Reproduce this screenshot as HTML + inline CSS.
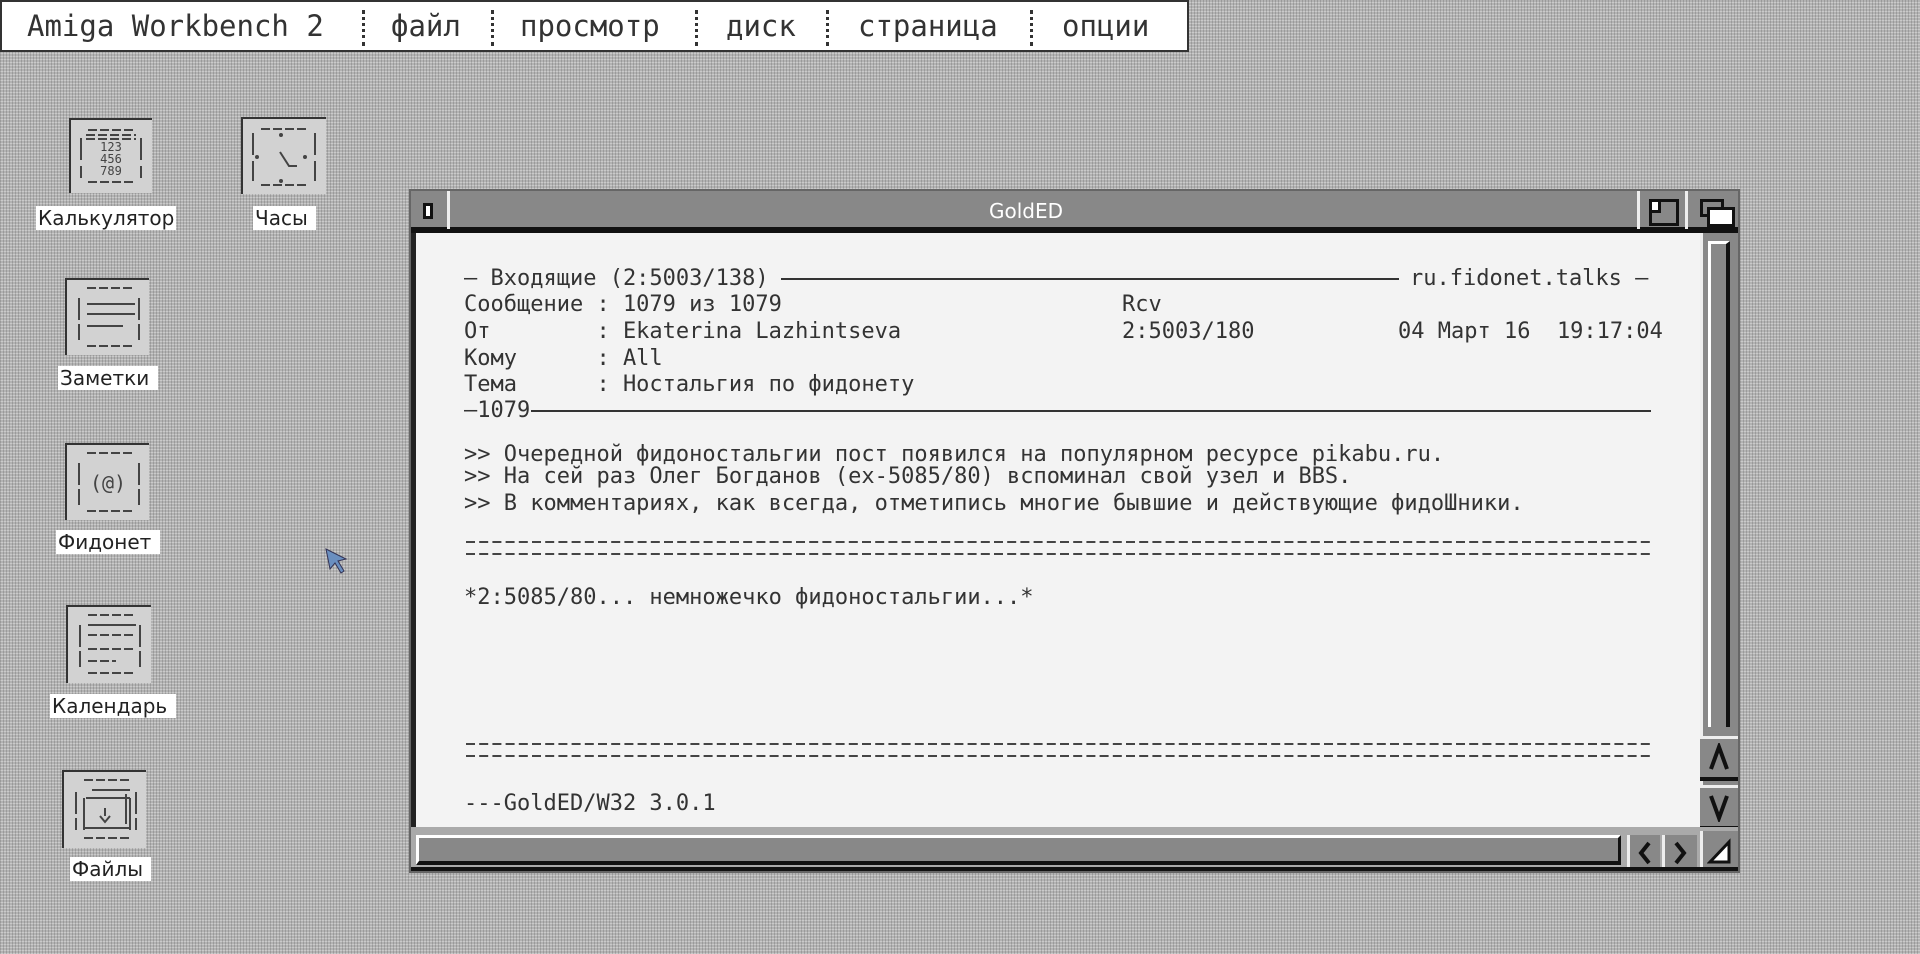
<!DOCTYPE html>
<html><head><meta charset="utf-8"><style>
*{margin:0;padding:0;box-sizing:border-box}
body{width:1920px;height:954px;overflow:hidden;position:relative;
background:repeating-linear-gradient(90deg,rgba(0,0,0,.14) 0 1px,transparent 1px 3px),repeating-linear-gradient(0deg,rgba(255,255,255,.3) 0 1px,transparent 1px 3px),#b3b3b3;
font-family:"DejaVu Sans Mono","Liberation Mono",monospace;color:#2a2a2a}
.abs{position:absolute}
#menu{left:0;top:0;width:1189px;height:52px;background:#fff;border:2px solid #333;}
#menu span{position:absolute;top:6px;font-size:29px;line-height:36px;color:#333;white-space:pre}
#menu i{position:absolute;top:8px;height:36px;border-left:3px dotted #333}
.icon{position:absolute;background:#d2d2d2;border-top:2px solid #333;border-left:2px solid #333}
.lbl{position:absolute;background:#fff;font-family:"DejaVu Sans","Liberation Sans",sans-serif;font-size:20px;line-height:24px;color:#222;padding:0 2px;white-space:pre}
#win{left:409px;top:189px;width:1331px;height:684px;background:#fff;border:2px solid #666}
.t{position:absolute;font-size:22px;line-height:27px;white-space:pre;color:#333}
.gb{position:absolute;background:#888}
</style></head><body>
<div id="menu" class="abs">
<span style="left:25px">Amiga Workbench 2</span><i style="left:360px"></i>
<span style="left:389px">файл</span><i style="left:489px"></i>
<span style="left:518px">просмотр</span><i style="left:693px"></i>
<span style="left:724px">диск</span><i style="left:824px"></i>
<span style="left:856px">страница</span><i style="left:1028px"></i>
<span style="left:1060px">опции</span>
</div>

<!-- icons -->
<div class="icon" style="left:69px;top:118px;width:83px;height:75px">
<svg width="80" height="72" stroke="#444" stroke-width="2" fill="none"><path d="M17 10h46M15 15h50M15 19h50" stroke-dasharray="9 3"/><path d="M10 18v22M10 46v12M70 18v22M70 46v12"/><path d="M17 62h46" stroke-dasharray="9 3"/>
<text x="40" y="31" font-size="12" fill="#444" stroke="none" text-anchor="middle" font-family="DejaVu Sans Mono">123</text><text x="40" y="43" font-size="12" fill="#444" stroke="none" text-anchor="middle" font-family="DejaVu Sans Mono">456</text><text x="40" y="55" font-size="12" fill="#444" stroke="none" text-anchor="middle" font-family="DejaVu Sans Mono">789</text></svg></div>
<div class="lbl" style="left:36px;top:206px">Калькулятор</div>
<div class="icon" style="left:241px;top:117px;width:85px;height:77px">
<svg width="82" height="74" stroke="#444" stroke-width="2" fill="none"><path d="M18 10h46M18 66h46" stroke-dasharray="9 3"/><path d="M10 14v22M10 42v20M72 14v22M72 42v20M37 33l9 14h8"/><circle cx="38" cy="16" r="1" fill="#444"/><circle cx="38" cy="62" r="1" fill="#444"/><circle cx="14" cy="38" r="1" fill="#444"/><circle cx="62" cy="38" r="1" fill="#444"/></svg></div>
<div class="lbl" style="left:253px;top:206px">Часы </div>

<div class="icon" style="left:65px;top:278px;width:84px;height:77px">
<svg width="82" height="74" stroke="#444" stroke-width="2" fill="none"><path d="M20 8h46M20 66h46" stroke-dasharray="9 3"/><path d="M12 18v22M12 44v16M72 18v22M72 44v16M20 24h48M20 34h48M20 46h36"/></svg></div>
<div class="lbl" style="left:58px;top:366px">Заметки </div>

<div class="icon" style="left:65px;top:443px;width:84px;height:77px">
<svg width="82" height="74" stroke="#444" stroke-width="2" fill="none"><path d="M20 8h46M20 66h46" stroke-dasharray="9 3"/><path d="M12 18v22M12 44v16M72 18v22M72 44v16"/><text x="41" y="45" font-size="20" fill="#444" stroke="none" text-anchor="middle" font-family="DejaVu Sans Mono">(@)</text></svg></div>
<div class="lbl" style="left:56px;top:530px">Фидонет </div>

<div class="icon" style="left:66px;top:605px;width:85px;height:78px">
<svg width="82" height="74" stroke="#444" stroke-width="2" fill="none"><path d="M20 8h46M20 28h46M20 42h46M20 54h28M20 66h46" stroke-dasharray="9 3"/><path d="M12 18v22M12 44v16M72 18v22M72 44v16M20 18h48"/></svg></div>
<div class="lbl" style="left:50px;top:694px">Календарь </div>

<div class="icon" style="left:62px;top:770px;width:84px;height:78px">
<svg width="82" height="74" stroke="#444" stroke-width="2" fill="none"><path d="M20 8h46M20 66h46" stroke-dasharray="9 3"/><path d="M12 20v22M12 46v12M72 20v22M72 46v12M28 18h38M22 26h44M20 26v32M66 26v32M20 56h46M62 22v30M41 36v8M36 44l5 6 5-6"/></svg></div>
<div class="lbl" style="left:70px;top:857px">Файлы </div>

<!-- cursor -->
<svg class="abs" style="left:324px;top:547px" width="26" height="28"><path d="M2 2l20 10-8 2 6 10-3 2-6-10-5 6z" fill="#6a8fc0" stroke="#335" stroke-width="1"/></svg>

<!-- window -->
<div id="win" class="abs">
 <div class="gb" style="left:0;top:0;width:1327px;height:42px;border-bottom:6px solid #111"></div>
 <div class="abs" style="left:36px;top:0;width:3px;height:38px;background:#eee"></div>
 <div class="abs" style="left:12px;top:12px;width:10px;height:16px;background:#fff;border:3px solid #111"></div>
 <div class="abs" style="left:565px;top:0;width:100px;height:38px;text-align:center;color:#fff;font-family:'DejaVu Sans','Liberation Sans',sans-serif;font-size:20px;line-height:40px">GoldED</div>
 <div class="abs" style="left:1226px;top:0;width:3px;height:38px;background:#eee"></div>
 <div class="abs" style="left:1274px;top:0;width:3px;height:38px;background:#eee"></div>
 <div class="abs" style="left:1238px;top:8px;width:30px;height:27px;background:#888;border:3px solid #111"></div>
 <div class="abs" style="left:1241px;top:11px;width:9px;height:11px;background:#fff;border-right:3px solid #111;border-bottom:3px solid #111"></div>
 <div class="abs" style="left:1289px;top:8px;width:24px;height:18px;background:#888;border:3px solid #111"></div>
 <div class="abs" style="left:1296px;top:16px;width:28px;height:20px;background:#fff;border:3px solid #111"></div>

 <!-- content -->
 <div class="abs" style="left:0;top:42px;width:1289px;height:594px;background:#f3f3f3;border-left:5px solid #222"></div>
 <div class="t" style="left:53px;top:74px">— Входящие (2:5003/138)</div>
 <div class="abs" style="left:370px;top:87px;width:618px;height:2px;background:#333"></div>
 <div class="t" style="left:999px;top:74px">ru.fidonet.talks —</div>
 <div class="t" style="left:53px;top:100px">Сообщение : 1079 из 1079</div>
 <div class="t" style="left:711px;top:100px">Rcv</div>
 <div class="t" style="left:53px;top:127px">От        : Ekaterina Lazhintseva</div>
 <div class="t" style="left:711px;top:127px">2:5003/180</div>
 <div class="t" style="left:987px;top:127px">04 Март 16  19:17:04</div>
 <div class="t" style="left:53px;top:154px">Кому      : All</div>
 <div class="t" style="left:53px;top:180px">Тема      : Ностальгия по фидонету</div>
 <div class="t" style="left:53px;top:206px">—1079</div>
 <div class="abs" style="left:120px;top:219px;width:1120px;height:2px;background:#333"></div>
 <div class="t" style="left:53px;top:250px">&gt;&gt; Очередной фидоностальгии пост появился на популярном ресурсе pikabu.ru.</div>
 <div class="t" style="left:53px;top:272px">&gt;&gt; На сей раз Олег Богданов (ex-5085/80) вспоминал свой узел и BBS.</div>
 <div class="t" style="left:53px;top:299px">&gt;&gt; В комментариях, как всегда, отметипись многие бывшие и действующие фидоШники.</div>
 <svg class="abs" style="left:53px;top:345px" width="1190" height="24"><path d="M2 6h1186M2 18h1186" stroke="#444" stroke-width="2" stroke-dasharray="9 4.2"/></svg>
 <div class="t" style="left:53px;top:393px">*2:5085/80... немножечко фидоностальгии...*</div>
 <svg class="abs" style="left:53px;top:547px" width="1190" height="24"><path d="M2 6h1186M2 18h1186" stroke="#444" stroke-width="2" stroke-dasharray="9 4.2"/></svg>
 <div class="t" style="left:53px;top:599px">---GoldED/W32 3.0.1</div>

 <!-- right scrollbar -->
 <div class="gb" style="left:1289px;top:42px;width:38px;height:594px;border-left:3px solid #eee"></div>
 <div class="abs" style="left:1297px;top:50px;width:22px;height:486px;background:#888;border-top:3px solid #fff;border-left:3px solid #fff;border-right:4px solid #111"></div>
 <div class="gb" style="left:1289px;top:545px;width:38px;height:45px;border-bottom:4px solid #111;border-top:3px solid #eee"></div>
 <svg class="abs" style="left:1296px;top:552px" width="24" height="30"><path d="M4 26L12 4l8 22" stroke="#111" stroke-width="4" fill="none"/></svg>
 <div class="gb" style="left:1289px;top:594px;width:38px;height:45px;border-bottom:4px solid #111;border-top:3px solid #eee"></div>
 <svg class="abs" style="left:1296px;top:601px" width="24" height="30"><path d="M4 4l8 22 8-22" stroke="#111" stroke-width="4" fill="none"/></svg>

 <!-- bottom bar -->
 <div class="abs" style="left:0;top:636px;width:1327px;height:44px;background:#aaa"></div>
 <div class="abs" style="left:5px;top:644px;width:1205px;height:30px;background:#888;border-top:3px solid #fff;border-left:3px solid #fff;border-bottom:4px solid #111;border-right:3px solid #111"></div>
 <div class="gb" style="left:1216px;top:644px;width:33px;height:36px;border-left:3px solid #eee"></div>
 <svg class="abs" style="left:1224px;top:649px" width="20" height="26"><path d="M14 3L6 13l8 10" stroke="#111" stroke-width="4" fill="none"/></svg>
 <div class="gb" style="left:1251px;top:644px;width:35px;height:36px;border-left:3px solid #eee"></div>
 <svg class="abs" style="left:1259px;top:649px" width="20" height="26"><path d="M6 3l8 10-8 10" stroke="#111" stroke-width="4" fill="none"/></svg>
 <div class="gb" style="left:1289px;top:640px;width:38px;height:40px;border-left:3px solid #eee"></div>
 <svg class="abs" style="left:1296px;top:647px" width="26" height="28"><path d="M3 24L22 4v20z" fill="#fff" stroke="#111" stroke-width="3"/></svg>
 <div class="abs" style="left:0;top:676px;width:1327px;height:4px;background:#111"></div>
</div>
</body></html>
